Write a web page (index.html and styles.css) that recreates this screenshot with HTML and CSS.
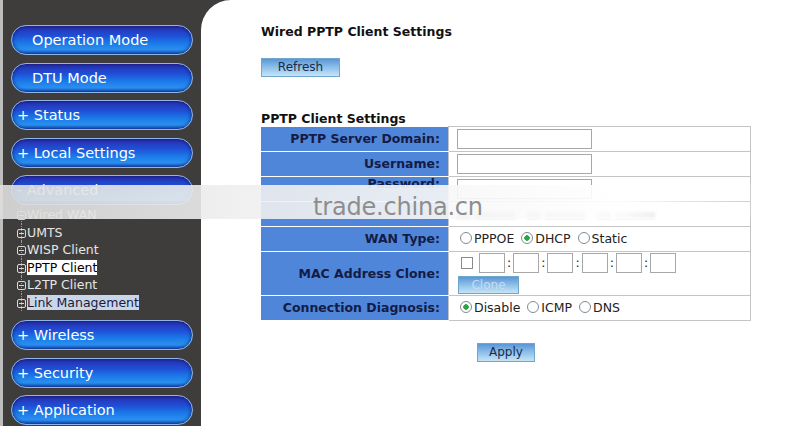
FILE: index.html
```html
<!DOCTYPE html>
<html lang="en">
<head>
    <meta charset="UTF-8">
    <title>Wired PPTP Client Settings</title>
    <link rel="stylesheet" href="styles.css">
</head>
<body>
<div class="page">
    <div class="sidebar">
        <div class="menu-btn"><span class="pad">Operation Mode</span></div>
        <div class="menu-btn"><span class="pad">DTU Mode</span></div>
        <div class="menu-btn">+ Status</div>
        <div class="menu-btn">+ Local Settings</div>
        <div class="menu-btn">- Advanced</div>
        <ul class="tree">
            <li><span class="node"></span>Wired WAN</li>
            <li><span class="node"></span>UMTS</li>
            <li><span class="node"></span>WISP Client</li>
            <li><span class="node"></span><span class="current">PPTP Client</span></li>
            <li><span class="node"></span>L2TP Client</li>
            <li><span class="node"></span><span class="hover">Link Management</span></li>
        </ul>
        <div class="menu-btn">+ Wireless</div>
        <div class="menu-btn">+ Security</div>
        <div class="menu-btn">+ Application</div>
    </div>
    <div class="main">
        <h3 class="title">Wired PPTP Client Settings</h3>
        <button class="btn refresh">Refresh</button>
        <h4 class="subtitle">PPTP Client Settings</h4>
        <table class="settings">
            <tr>
                <td class="label">PPTP Server Domain:</td>
                <td><input type="text" class="field"></td>
            </tr>
            <tr>
                <td class="label">Username:</td>
                <td><input type="text" class="field"></td>
            </tr>
            <tr>
                <td class="label pw">Password:</td>
                <td><input type="password" class="field"></td>
            </tr>
            <tr>
                <td class="label"></td>
                <td class="opts">
                    <span class="blur"></span><span class="blur wide"></span><span class="blur"></span><span class="blur wide"></span><span class="blur"></span><span class="blur wide"></span>
                </td>
            </tr>
            <tr>
                <td class="label">WAN Type:</td>
                <td class="opts"><span class="radio"></span>PPPOE <span class="radio on"></span>DHCP <span class="radio"></span>Static</td>
            </tr>
            <tr>
                <td class="label mac-label">MAC Address Clone:</td>
                <td class="opts">
                    <div class="mac">
                        <span class="check"></span>
                        <input class="mac-part">:<input class="mac-part">:<input class="mac-part">:<input class="mac-part">:<input class="mac-part">:<input class="mac-part">
                    </div>
                    <button class="btn clone">Clone</button>
                </td>
            </tr>
            <tr>
                <td class="label">Connection Diagnosis:</td>
                <td class="opts"><span class="radio on"></span>Disable <span class="radio"></span>ICMP <span class="radio"></span>DNS</td>
            </tr>
        </table>
        <div class="actions">
            <button class="btn apply">Apply</button>
        </div>
    </div>
    <div class="band"></div>
    <div class="watermark">trade.china.cn</div>
</div>
</body>
</html>
```

FILE: styles.css
```css
body {
    margin: 0;
    font-family: "DejaVu Sans", Verdana, sans-serif;
    background: #ffffff;
}
.page {
    position: relative;
    display: flex;
    width: 800px;
    height: 426px;
    overflow: hidden;
    background: linear-gradient(to right, #3f3d3b 0, #3f3d3b 230px, #ffffff 230px);
}
.sidebar {
    width: 198px;
    flex: none;
    border-left: 3px solid #bdbdbd;
    background: #3f3d3b;
    padding-top: 25px;
    box-sizing: content-box;
}
.menu-btn {
    height: 30px;
    margin: 0 8px 7.5px 8px;
    box-sizing: border-box;
    border-radius: 15px;
    border: 1px solid #8fb4ea;
    background: linear-gradient(to bottom, #2a2fb0 0%, #1f4fd6 35%, #1a78e8 60%, #2a90f0 85%, #1a55c8 100%);
    box-shadow: inset 0 0 4px rgba(0, 0, 60, 0.7);
    color: #ffffff;
    font-size: 14.5px;
    line-height: 28px;
    padding-left: 5px;
    white-space: nowrap;
}
.menu-btn .pad {
    padding-left: 15px;
}
.tree {
    list-style: none;
    margin: -6.5px 0 9px 0;
    padding: 0 0 0 14px;
}
.tree li {
    position: relative;
    height: 17.5px;
    line-height: 17.5px;
    font-size: 12.5px;
    color: #e6e6e6;
    white-space: nowrap;
    border-left: 1px dotted #9a9a9a;
    margin-left: 4px;
}
.tree .node {
    display: inline-block;
    width: 7px;
    height: 7px;
    border: 1px solid #d8d8d8;
    border-radius: 2px;
    margin-left: -5px;
    margin-right: 1px;
    vertical-align: -1px;
    background: linear-gradient(#d8d8d8, #d8d8d8) center / 5px 1px no-repeat;
}
.tree .current {
    background: #ffffff;
    color: #000000;
    outline: 1px dotted #444444;
}
.tree .hover {
    background: #c9d6ea;
    color: #1a1a3a;
}
.main {
    flex: 1;
    background: #ffffff;
    border-top-left-radius: 30px;
    padding-left: 60px;
    padding-top: 24px;
}
.title {
    margin: 0 0 17px 0;
    font-size: 12.5px;
    font-weight: bold;
    color: #111111;
}
.btn {
    font-family: "DejaVu Sans", Verdana, sans-serif;
    font-size: 12px;
    color: #1a2a4a;
    border: 1px solid #6fa6cc;
    background: linear-gradient(to bottom, #5b96d6 0%, #8ec0ea 50%, #c6e4f6 100%);
    padding: 0;
    height: 19px;
    line-height: 17px;
}
.refresh {
    width: 79px;
}
.subtitle {
    margin: 34px 0 0 0;
    font-size: 12.5px;
    font-weight: bold;
    color: #111111;
}
.settings {
    width: 490px;
    border-collapse: collapse;
    border: 1px solid #b9b9b9;
}
.settings td {
    border: 1px solid #c4c4c4;
    padding: 0 8px;
    height: 24px;
    font-size: 12.5px;
    line-height: 14px;
    color: #222222;
}
.settings td.label {
    width: 170px;
    background: #4f86d9;
    border-color: #ffffff #c4c4c4 #ffffff #4f86d9;
    text-align: right;
    font-weight: bold;
    font-size: 12.5px;
    color: #141b45;
}
.settings td.pw {
    vertical-align: top;
    padding-top: 0;
}
.field {
    width: 135px;
    height: 20px;
    box-sizing: border-box;
    border: 1px solid #a7a7a7;
    margin: 0;
    vertical-align: middle;
}
.opts {
    white-space: nowrap;
}
.blur {
    display: inline-block;
    width: 14px;
    height: 6px;
    margin: 0 4px 0 0;
    vertical-align: middle;
    background: #9a9a9a;
    filter: blur(1.5px);
    opacity: 0.6;
}
.blur.wide {
    width: 40px;
    margin-right: 12px;
}
.radio {
    display: inline-block;
    width: 12px;
    height: 12px;
    border: 1px solid #7e8c96;
    border-radius: 50%;
    box-sizing: border-box;
    margin: 0 2px 0 3px;
    vertical-align: -1px;
    background: #ffffff;
}
.radio.on {
    background: radial-gradient(circle, #2fa246 0, #2fa246 2.5px, #ffffff 3px);
}
.mac {
    display: flex;
    align-items: center;
    gap: 2px;
    padding-top: 1px;
}
.check {
    width: 12px;
    height: 12px;
    border: 1px solid #8a8a8a;
    box-sizing: border-box;
    margin: 0 4px 0 4px;
}
.mac-part {
    width: 26px;
    height: 20px;
    box-sizing: border-box;
    border: 1px solid #a7a7a7;
    padding: 0;
}
.clone {
    display: block;
    width: 61px;
    height: 18px;
    margin: 3px 0 1px 1px;
    color: #c7dcee;
}
.actions {
    width: 490px;
    text-align: center;
    padding-top: 20px;
}
.apply {
    width: 58px;
}
.band {
    position: absolute;
    left: 0;
    top: 185px;
    width: 780px;
    height: 34px;
    background: linear-gradient(to right, rgba(222, 222, 222, 0.9) 0, rgba(238, 238, 238, 0.9) 30%, rgba(255, 255, 255, 0.92) 80%, rgba(255, 255, 255, 0) 100%);
}
.watermark {
    position: absolute;
    left: 313px;
    top: 199px;
    font-family: "DejaVu Sans", sans-serif;
    font-size: 24px;
    line-height: 17px;
    color: #8d8d8d;
    letter-spacing: -0.2px;
}
```
